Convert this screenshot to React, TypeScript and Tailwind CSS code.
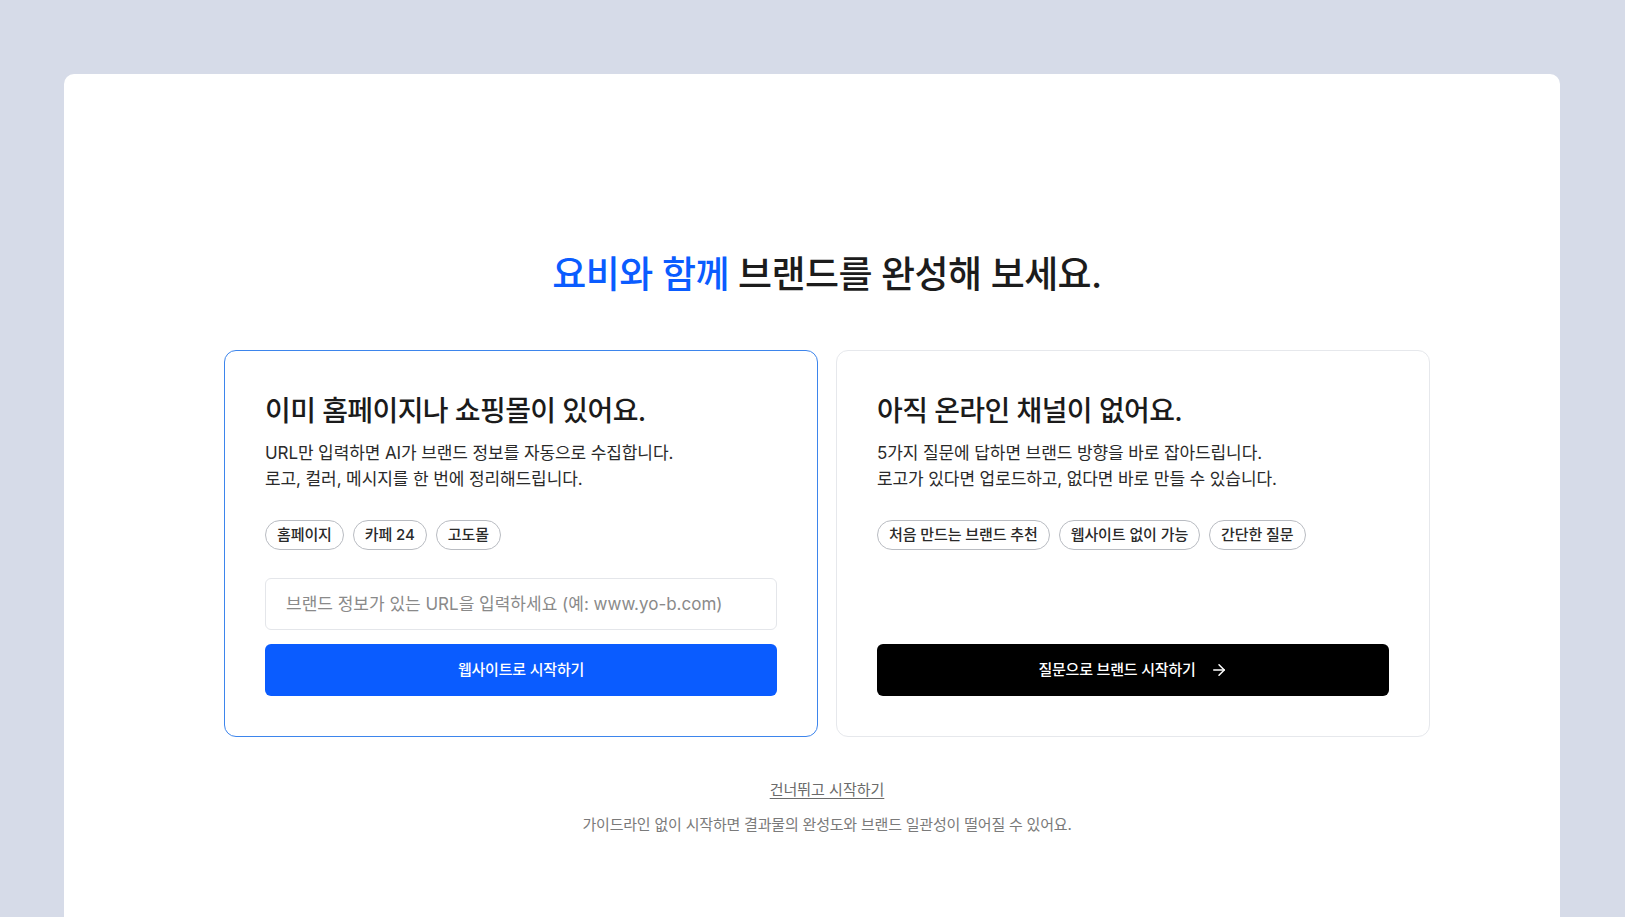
import { ArrowRight } from 'lucide-react';

const font = { fontFamily: 'Inter, "Noto Sans CJK KR", sans-serif' };

interface OptionCardProps {
  title: string;
  lines: string[];
  tags: string[];
  active?: boolean;
  children: React.ReactNode;
}

function OptionCard({ title, lines, tags, active, children }: OptionCardProps) {
  return (
    <div
      className={
        active
          ? 'flex w-[594px] flex-col rounded-xl border border-[#3d85ec] bg-white px-10 pt-[42px] pb-10'
          : 'flex w-[594px] flex-col rounded-xl border border-[#e6e8ec] bg-white px-10 pt-[42px] pb-10'
      }
    >
      <h2 className="text-[28px] leading-[36px] font-medium tracking-[-0.6px] text-[#1b1b1b]">{title}</h2>
      <div className="mt-[11px] text-[17px] leading-[26px] text-[#2a2a2a] tracking-[-0.1px]">
        {lines.map((line) => (
          <p key={line}>{line}</p>
        ))}
      </div>
      <div className="mt-7 flex gap-[9px]">
        {tags.map((tag) => (
          <span
            key={tag}
            className="flex h-[30px] items-center rounded-full border border-[#b9bcc2] px-[11px] text-[15px] font-medium text-[#2a2a2a] tracking-[-0.1px]"
          >
            {tag}
          </span>
        ))}
      </div>
      {children}
    </div>
  );
}

export default function App() {
  return (
    <div className="min-h-[917px] bg-[#d6dbe8] pt-[74px] pl-[64px] pr-[65px]" style={font}>
      <div className="min-h-[843px] rounded-t-[10px] bg-white pt-[169px] pl-[160px] pr-[130px]">
        {/* 타이틀 */}
        <h1 className="text-center text-[37px] leading-[64px] font-medium tracking-[-0.6px] text-[#1c1c1c]">
          <span className="text-[#0a5cff]">요비와 함께</span> 브랜드를 완성해 보세요.
        </h1>

        {/* 선택 카드 */}
        <div className="mt-[43px] flex justify-center gap-[18px]">
          <OptionCard
            active
            title="이미 홈페이지나 쇼핑몰이 있어요."
            lines={[
              'URL만 입력하면 AI가 브랜드 정보를 자동으로 수집합니다.',
              '로고, 컬러, 메시지를 한 번에 정리해드립니다.',
            ]}
            tags={['홈페이지', '카페 24', '고도몰']}
          >
            <input
              className="mt-7 h-[52px] w-full rounded-md border border-[#e4e6ea] px-5 text-[17px] text-[#333] outline-none placeholder:text-[#8a8a8a]"
              placeholder="브랜드 정보가 있는 URL을 입력하세요 (예: www.yo-b.com)"
            />
            <button className="mt-[14px] h-[52px] w-full rounded-md bg-[#0a5cff] text-[15px] font-medium text-white tracking-[-0.2px]">
              웹사이트로 시작하기
            </button>
          </OptionCard>

          <OptionCard
            title="아직 온라인 채널이 없어요."
            lines={[
              '5가지 질문에 답하면 브랜드 방향을 바로 잡아드립니다.',
              '로고가 있다면 업로드하고, 없다면 바로 만들 수 있습니다.',
            ]}
            tags={['처음 만드는 브랜드 추천', '웹사이트 없이 가능', '간단한 질문']}
          >
            <button className="mt-auto flex h-[52px] w-full items-center justify-center gap-[14px] rounded-md bg-black text-[15px] font-medium text-white tracking-[-0.2px]">
              질문으로 브랜드 시작하기
              <ArrowRight className="h-[18px] w-[18px]" strokeWidth={2} />
            </button>
          </OptionCard>
        </div>

        {/* 건너뛰기 */}
        <div className="mt-[41px] flex flex-col items-center">
          <button className="text-[15px] leading-[24px] text-[#6b6b6b] underline underline-offset-[3px]">
            건너뛰고 시작하기
          </button>
          <p className="mt-[11px] text-[15px] leading-[24px] text-[#7a7a7a] tracking-[-0.2px]">
            가이드라인 없이 시작하면 결과물의 완성도와 브랜드 일관성이 떨어질 수 있어요.
          </p>
        </div>
      </div>
    </div>
  );
}
